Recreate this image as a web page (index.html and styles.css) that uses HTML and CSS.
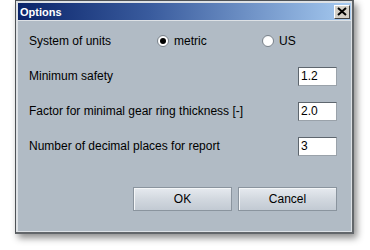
FILE: index.html
```html
<!DOCTYPE html>
<html lang="en">
<head>
  <meta charset="UTF-8" />
  <title>Options</title>
  <link rel="stylesheet" href="styles.css">
</head>
<body>
  <div class="window">
    <div class="titlebar">
      <span class="title">Options</span>
      <span class="close">
        <svg width="10" height="9" viewBox="0 0 10 9"><path d="M1 1 L9 8 M9 1 L1 8" stroke="#000" stroke-width="2"/></svg>
      </span>
    </div>
    <div class="content">
      <div class="rows">
        <div class="row">
          <span class="label units">System of units</span>
          <span class="option metric"><span class="radio checked"></span>metric</span>
          <span class="option"><span class="radio"></span>US</span>
        </div>
        <div class="row">
          <span class="label">Minimum safety</span>
          <span class="field">1.2</span>
        </div>
        <div class="row">
          <span class="label">Factor for minimal gear ring thickness [-]</span>
          <span class="field">2.0</span>
        </div>
        <div class="row">
          <span class="label">Number of decimal places for report</span>
          <span class="field">3</span>
        </div>
      </div>
      <div class="buttons">
        <div class="button">OK</div>
        <div class="button">Cancel</div>
      </div>
    </div>
  </div>
</body>
</html>
```

FILE: styles.css
```css
* {
  margin: 0;
  padding: 0;
  box-sizing: border-box;
  font-family: 'Liberation Sans', Arial, sans-serif;
}
body {
  background: #ffffff;
  width: 370px;
  height: 250px;
  overflow: hidden;
}
.window {
  margin-left: 15px;
  width: 339px;
  height: 234px;
  border: 1px solid #4e5256;
  border-right-width: 2px;
  border-bottom-width: 2px;
  border-right-color: #62666a;
  border-bottom-color: #62666a;
  padding: 2px 1px 1px 2px;
  background: #dde1e5;
  box-shadow: 3px 4px 7px rgba(0, 0, 0, 0.45);
  display: flex;
  flex-direction: column;
}
.titlebar {
  height: 18px;
  display: flex;
  align-items: center;
  justify-content: space-between;
  padding: 0 1px 0 2px;
  background: linear-gradient(90deg, #0a246a 0%, #3a5c9e 40%, #a6caf0 100%);
  border-bottom: 1px solid #dde1e5;
}
.title {
  color: #ffffff;
  font-weight: bold;
  font-size: 11px;
}
.close {
  width: 16px;
  height: 14px;
  background: #d4d0c8;
  border: 1px solid;
  border-color: #ffffff #404040 #404040 #ffffff;
  display: flex;
  align-items: center;
  justify-content: center;
}
.content {
  flex: 1;
  background: #b1bbc5;
  padding: 10px 14px 20px 11px;
  display: flex;
  flex-direction: column;
  justify-content: space-between;
}
.rows {
  display: flex;
  flex-direction: column;
  gap: 15px;
}
.row {
  height: 20px;
  display: flex;
  align-items: center;
  font-size: 12px;
  color: #000000;
}
.label {
  flex: 1;
}
.label.units {
  flex: none;
  width: 128px;
}
.option {
  display: flex;
  align-items: center;
  gap: 5px;
}
.option.metric {
  width: 105px;
}
.radio {
  width: 12px;
  height: 12px;
  border-radius: 50%;
  border: 1px solid #7c848c;
  background: radial-gradient(circle at 60% 65%, #ffffff 55%, #e4e8ec 100%);
  display: flex;
  align-items: center;
  justify-content: center;
}
.radio.checked::after {
  content: '';
  width: 6px;
  height: 6px;
  border-radius: 50%;
  background: #000000;
}
.field {
  width: 39px;
  height: 19px;
  background: #ffffff;
  border: 1px solid;
  border-color: #5e666e #9aa2aa #9aa2aa #5e666e;
  padding: 0 2px;
  display: flex;
  align-items: center;
  font-size: 12px;
}
.buttons {
  display: flex;
  justify-content: flex-end;
  gap: 6px;
}
.button {
  width: 99px;
  height: 24px;
  border: 1px solid #8a949e;
  box-shadow: inset 1px 1px 0 #f4f6f8;
  background: linear-gradient(180deg, #e6eaef 0%, #d2d8df 50%, #c2cad3 100%);
  display: flex;
  align-items: center;
  justify-content: center;
  font-size: 12px;
  color: #000000;
}
```
